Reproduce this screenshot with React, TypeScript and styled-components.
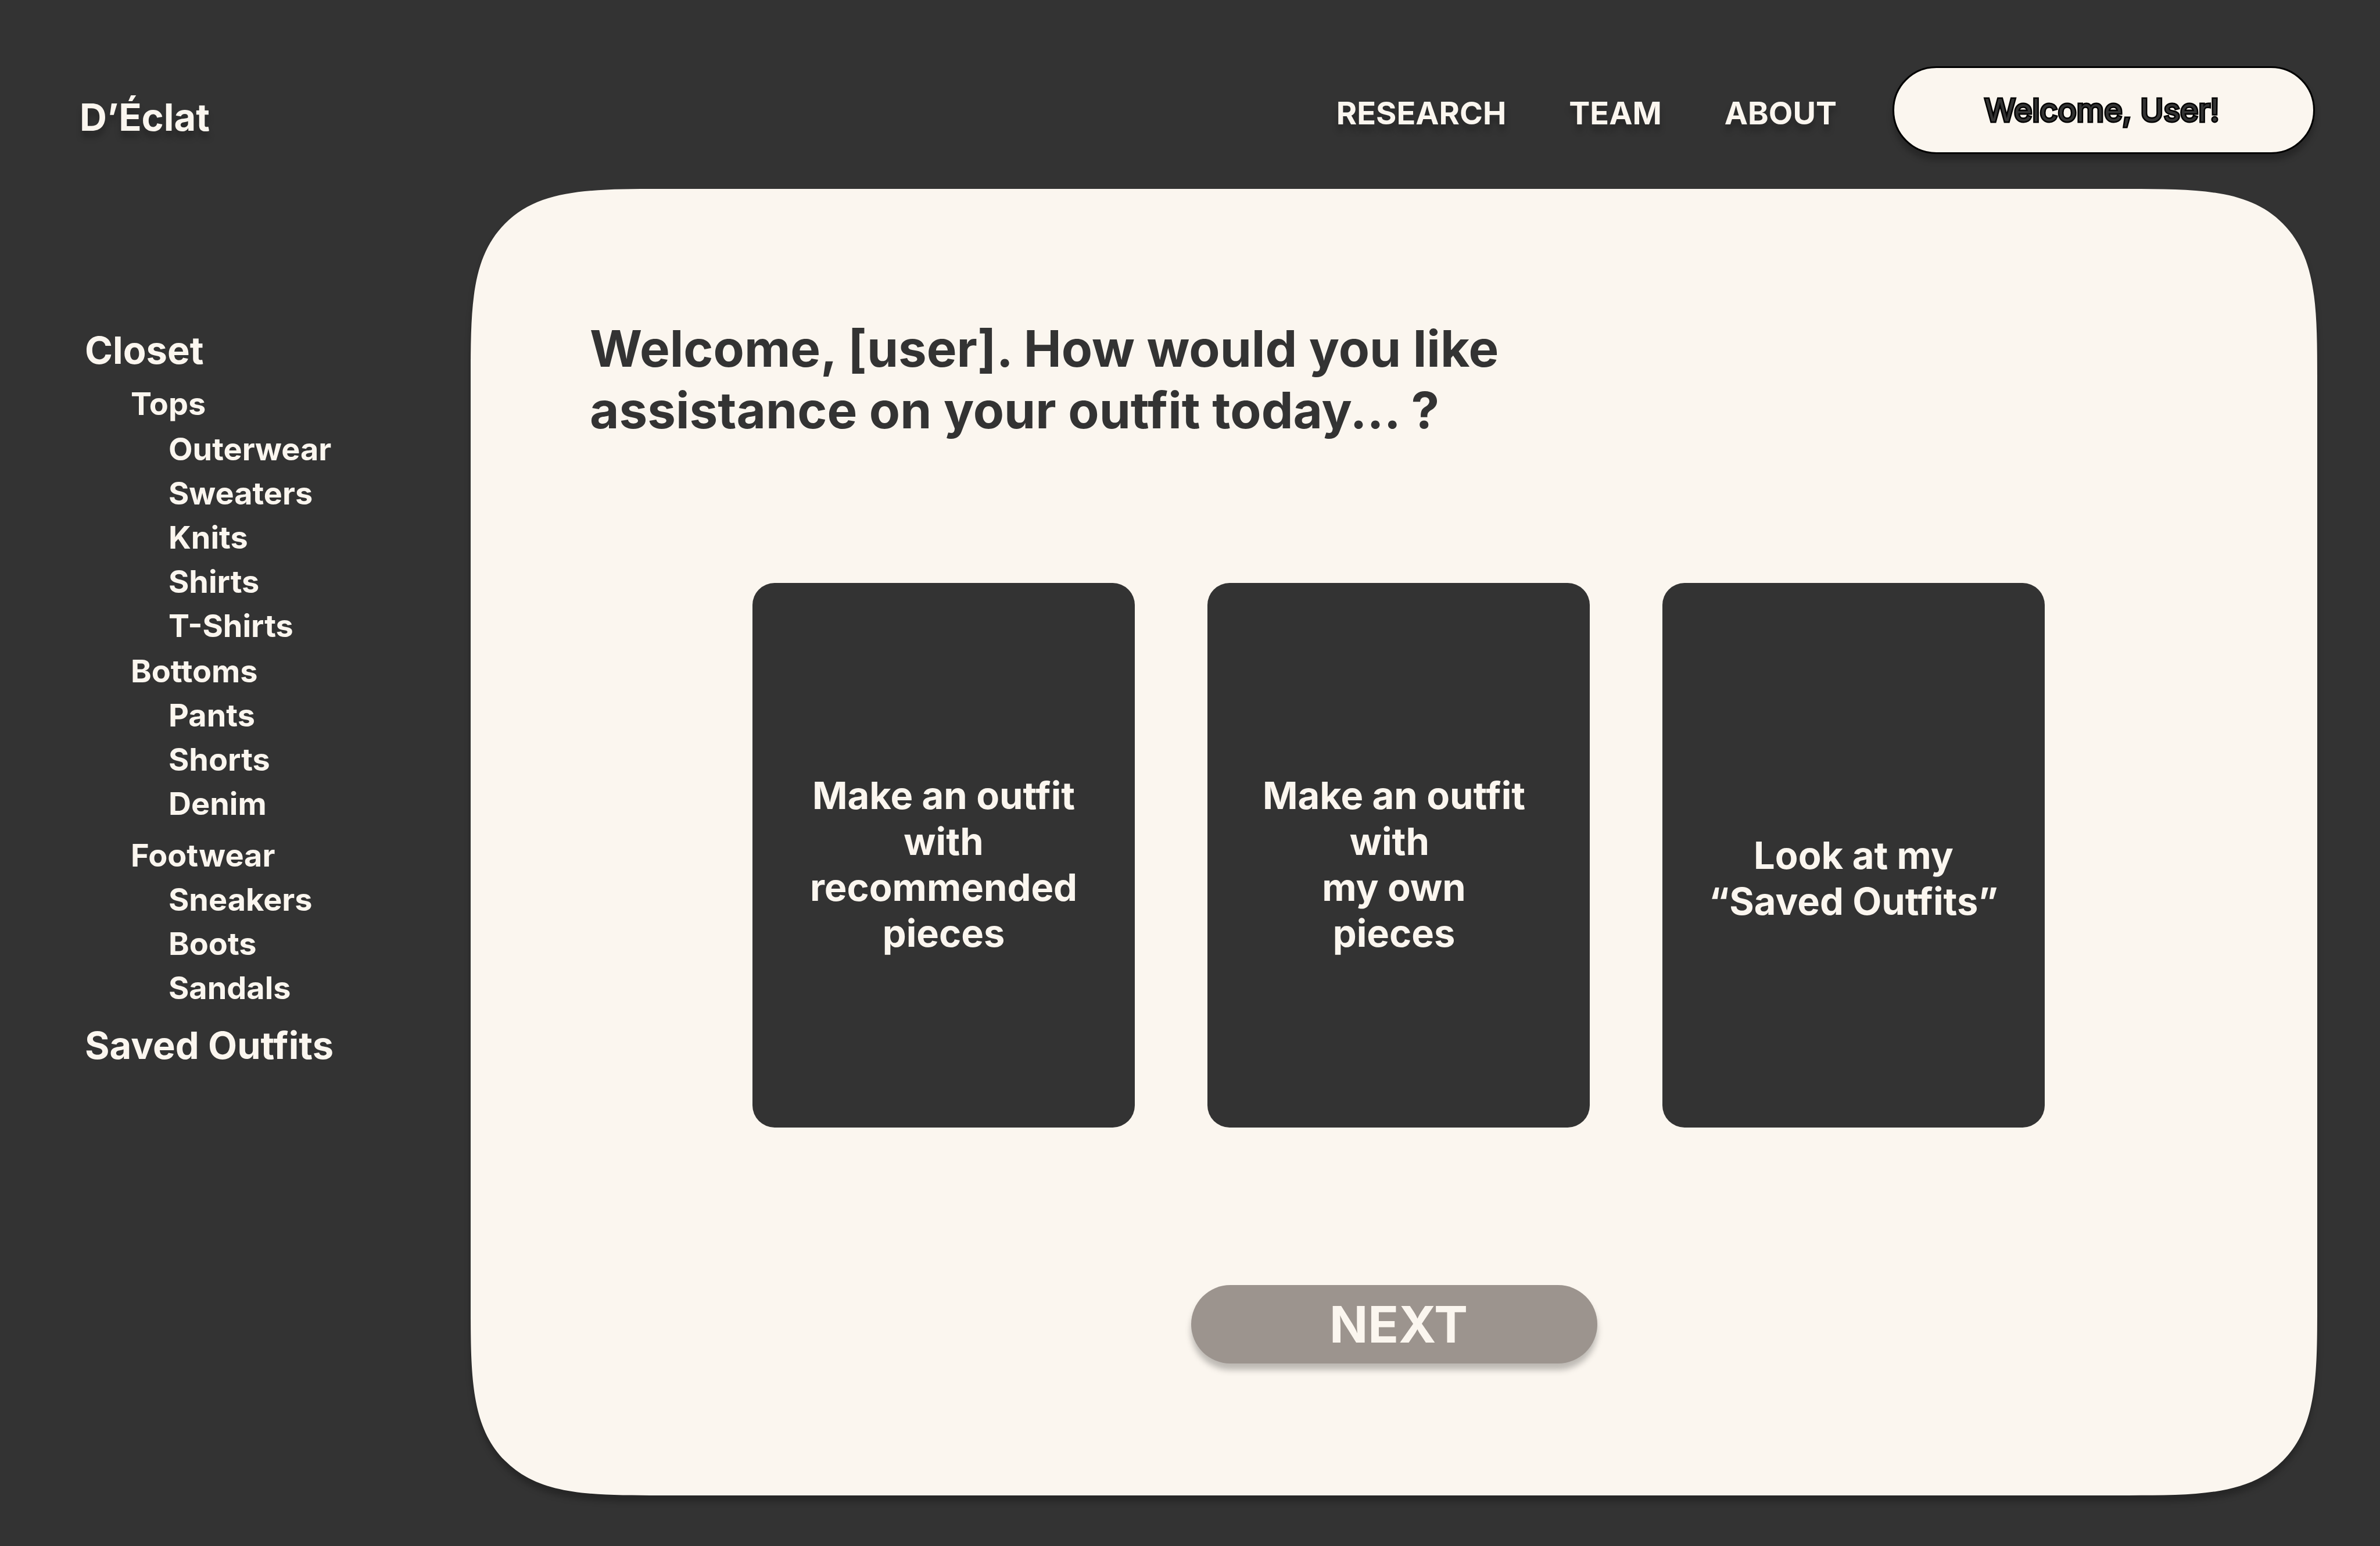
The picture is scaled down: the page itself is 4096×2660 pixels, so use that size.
import { Fragment } from "react";
import styled, { createGlobalStyle } from "styled-components";

const color = {
  ink: "#333333",
  cream: "#fbf6ef",
  taupe: "#9c948e",
  black: "#000000",
};

const dropShadow = "0 11px 11px rgba(0, 0, 0, 0.25)";

const GlobalStyle = createGlobalStyle`
  *, *::before, *::after {
    box-sizing: border-box;
  }

  body {
    margin: 0;
    background: ${color.ink};
    color: ${color.cream};
    font-family: Inter, "Liberation Sans", sans-serif;
    font-weight: 700;
  }
`;

const Page = styled.div`
  display: grid;
  grid-template-columns: 810px minmax(0, 1fr);
  min-height: 100vh;
  padding: 114px 108px 87px 0;
`;

const Sidebar = styled.aside`
  display: flex;
  flex-direction: column;
  align-items: flex-start;
  gap: 322px;
  padding-top: 48px;
`;

const Brand = styled.a`
  padding-left: 137px;
  color: inherit;
  font-size: 65px;
  line-height: 79px;
  text-decoration: none;
  text-shadow: ${dropShadow};
`;

const ClosetNav = styled.nav`
  display: flex;
  flex-direction: column;
  gap: 21px;
  padding-left: 146px;
`;

const NavLink = styled.a`
  display: block;
  width: max-content;
  color: inherit;
  font-size: 54px;
  line-height: 76px;
  text-decoration: none;
`;

const RootLink = styled(NavLink)`
  font-size: 65px;
  line-height: 79px;
`;

const Groups = styled.ul`
  margin: 0;
  padding: 0 0 0 79px;
  list-style: none;
`;

const Group = styled.li<{ $before: number }>`
  padding-top: ${(p) => p.$before}px;
`;

const Items = styled.ul<{ $before: number }>`
  margin: 0;
  padding: ${(p) => p.$before}px 0 0 65px;
  list-style: none;
`;

const Main = styled.div`
  display: flex;
  flex-direction: column;
  gap: 60px;
`;

const TopBar = styled.header`
  display: flex;
  align-items: center;
  justify-content: flex-end;
  gap: 96px;
  padding-right: 4px;
`;

const SiteNav = styled.nav`
  display: flex;
  gap: 108px;
  padding-top: 10px;
`;

const SiteLink = styled.a`
  color: inherit;
  font-size: 54px;
  line-height: 66px;
  text-decoration: none;
  text-shadow: ${dropShadow};
`;

const UserButton = styled.button`
  width: 727px;
  height: 151px;
  padding: 0 6px 0 0;
  border: 3px solid ${color.black};
  border-radius: 76px;
  background: ${color.cream};
  box-shadow: ${dropShadow};
  color: ${color.ink};
  font: 400 54px/66px Inter, "Liberation Sans", sans-serif;
  -webkit-text-stroke: 5px ${color.black};
  paint-order: stroke fill;
`;

const Panel = styled.main`
  display: flex;
  flex: 1;
  flex-direction: column;
  align-items: center;
  padding: 222px 205px 227px;
  border-radius: 209px;
  background: ${color.cream};
  box-shadow: ${dropShadow};

  @supports (corner-shape: superellipse(1.78)) {
    border-radius: 325px;
    corner-shape: superellipse(1.78);
  }
`;

const Question = styled.h1`
  align-self: flex-start;
  margin: 0;
  color: ${color.ink};
  font-size: 87px;
  line-height: 106px;
`;

const Cards = styled.div`
  display: flex;
  gap: 125px;
  padding: 244px 0 271px 16px;
`;

const Card = styled.button<{ $top: number; $right?: number }>`
  width: 658px;
  height: 937px;
  padding: ${(p) => p.$top}px ${(p) => p.$right ?? 0}px 0 0;
  border: 0;
  border-radius: 38px;
  background: ${color.ink};
  color: ${color.cream};
  font: 700 65px/79px Inter, "Liberation Sans", sans-serif;
  text-align: center;
`;

const NextButton = styled.button`
  width: 699px;
  height: 135px;
  padding: 0 0 0 16px;
  border: 0;
  border-radius: 68px;
  background: ${color.taupe};
  box-shadow: ${dropShadow};
  color: ${color.cream};
  font: 700 87px/106px Inter, "Liberation Sans", sans-serif;
`;

const groups = [
  { name: "Tops", before: 15, inner: 2, items: ["Outerwear", "Sweaters", "Knits", "Shirts", "T-Shirts"] },
  { name: "Bottoms", before: 2, inner: 0, items: ["Pants", "Shorts", "Denim"] },
  { name: "Footwear", before: 13, inner: 0, items: ["Sneakers", "Boots", "Sandals"] },
];

const cards = [
  { lines: ["Make an outfit", "with", "recommended", "pieces"], top: 30 },
  { lines: ["Make an outfit", "with\u00a0", "my own", "pieces"], top: 30, right: 16 },
  { lines: ["Look at my", "“Saved Outfits”"], top: 78 },
];

export default function App() {
  return (
    <>
      <GlobalStyle />
      <Page>
        <Sidebar>
          <Brand href="#home">D’Éclat</Brand>
          <ClosetNav aria-label="Closet">
            <div>
              <RootLink href="#closet">Closet</RootLink>
              <Groups>
                {groups.map((group) => (
                  <Group key={group.name} $before={group.before}>
                    <NavLink href={`#${group.name}`}>{group.name}</NavLink>
                    <Items $before={group.inner}>
                      {group.items.map((item) => (
                        <li key={item}>
                          <NavLink href={`#${item}`}>{item}</NavLink>
                        </li>
                      ))}
                    </Items>
                  </Group>
                ))}
              </Groups>
            </div>
            <RootLink href="#saved">Saved Outfits</RootLink>
          </ClosetNav>
        </Sidebar>
        <Main>
          <TopBar>
            <SiteNav aria-label="Site">
              <SiteLink href="#research">RESEARCH</SiteLink>
              <SiteLink href="#team">TEAM</SiteLink>
              <SiteLink href="#about">ABOUT</SiteLink>
            </SiteNav>
            <UserButton type="button">Welcome, User!</UserButton>
          </TopBar>
          <Panel>
            <Question>
              Welcome, [user]. How would you like
              <br />
              assistance on your outfit today... ?
            </Question>
            <Cards>
              {cards.map((card, index) => (
                <Card key={index} type="button" $top={card.top} $right={card.right}>
                  {card.lines.map((line, i) => (
                    <Fragment key={line}>
                      {i > 0 && <br />}
                      {line}
                    </Fragment>
                  ))}
                </Card>
              ))}
            </Cards>
            <NextButton type="button">NEXT</NextButton>
          </Panel>
        </Main>
      </Page>
    </>
  );
}
